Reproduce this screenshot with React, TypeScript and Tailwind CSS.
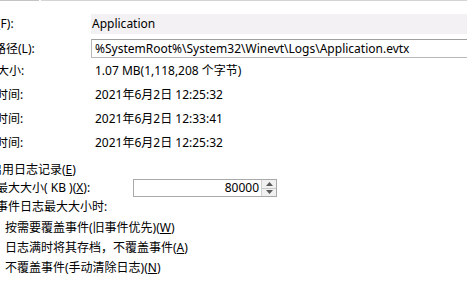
import React from "react";

const font = { fontFamily: "'Noto Sans', 'Noto Sans CJK SC', sans-serif" };

function Label({ text, shift }: { text: string; shift: string }) {
  return (
    <div className="w-[91px] shrink-0 overflow-hidden whitespace-nowrap">
      <span className={`inline-block ${shift}`}>{text}</span>
    </div>
  );
}

export default function App() {
  return (
    <div
      className="w-[467px] h-[287px] overflow-hidden bg-white text-[12px] leading-none text-[#000] relative"
      style={font}
    >
      <div className="flex h-px">
        <div className="w-[39px] bg-[#c4c4c4]" />
        <div className="w-[2px] bg-white" />
        <div className="flex-1 bg-[#d4d4d4]" />
      </div>

      {/* name */}
      <div className="flex items-center h-[20px] mt-[13px]">
        <Label text="全名(F):" shift="-ml-[27px]" />
        <div className="flex-1 h-[20px] bg-[#f4f1f4] flex items-center pl-[1px]">Application</div>
      </div>

      {/* path */}
      <div className="flex items-center h-[19px] mt-[5px]">
        <Label text="日志路径(L):" shift="-ml-[30px]" />
        <div className="flex-1 h-[19px] border border-[#b8b8b8] border-t-[#a0a0a0] border-r-0 flex items-center pl-[3px] whitespace-nowrap overflow-hidden">
          %SystemRoot%\System32\Winevt\Logs\Application.evtx
        </div>
      </div>

      <div className="flex items-center h-[24px] mt-[1px]">
        <Label text="日志大小:" shift="-ml-[27px]" />
        <div className="pl-[4px] whitespace-nowrap">1.07 MB(1,118,208 个字节)</div>
      </div>
      <div className="flex items-center h-[24px]">
        <Label text="创建时间:" shift="-ml-[28px]" />
        <div className="pl-[4px] whitespace-nowrap">2021年6月2日 12:25:32</div>
      </div>
      <div className="flex items-center h-[24px]">
        <Label text="修改时间:" shift="-ml-[28px]" />
        <div className="pl-[4px] whitespace-nowrap">2021年6月2日 12:33:41</div>
      </div>
      <div className="flex items-center h-[24px]">
        <Label text="访问时间:" shift="-ml-[28px]" />
        <div className="pl-[4px] whitespace-nowrap">2021年6月2日 12:25:32</div>
      </div>

      {/* enable logging */}
      <div className="flex items-center h-[18px] mt-[6px] whitespace-nowrap">
        <span className="-ml-[10px]">
          启用日志记录(<span className="underline">E</span>)
        </span>
      </div>

      {/* max size */}
      <div className="flex items-center h-[18px] whitespace-nowrap">
        <div className="w-[133px] shrink-0 overflow-hidden">
          <span className="inline-block -ml-[28px]">
            日志最大大小( KB )(<span className="underline">X</span>):
          </span>
        </div>
        <div className="w-[144px] h-[18px] border border-[#a9a9a9] flex items-center justify-end">
          <span className="pr-[2px]">80000</span>
          <div className="w-[15px] h-[16px] flex flex-col border-l border-[#d0d0d0]">
            <div className="flex-1 flex items-center justify-center bg-[#f0f0f0] border-b border-[#c8c8c8]">
              <svg width="7" height="4" viewBox="0 0 7 4">
                <path d="M0 4 L3.5 0 L7 4 Z" fill="#5a5a5a" />
              </svg>
            </div>
            <div className="flex-1 flex items-center justify-center bg-[#f0f0f0]">
              <svg width="7" height="4" viewBox="0 0 7 4">
                <path d="M0 0 L3.5 4 L7 0 Z" fill="#5a5a5a" />
              </svg>
            </div>
          </div>
        </div>
      </div>

      <div className="flex items-center h-[18px] mt-[1px] whitespace-nowrap">
        <span className="-ml-[28px]">达到事件日志最大大小时:</span>
      </div>

      <div className="flex flex-col pl-[5px] whitespace-nowrap">
        <div className="flex items-center h-[20px] mt-[2px]">
          按需要覆盖事件(旧事件优先)(<span className="underline">W</span>)
        </div>
        <div className="flex items-center h-[20px]">
          日志满时将其存档，不覆盖事件(<span className="underline">A</span>)
        </div>
        <div className="flex items-center h-[20px]">
          不覆盖事件(手动清除日志)(<span className="underline">N</span>)
        </div>
      </div>
    </div>
  );
}
